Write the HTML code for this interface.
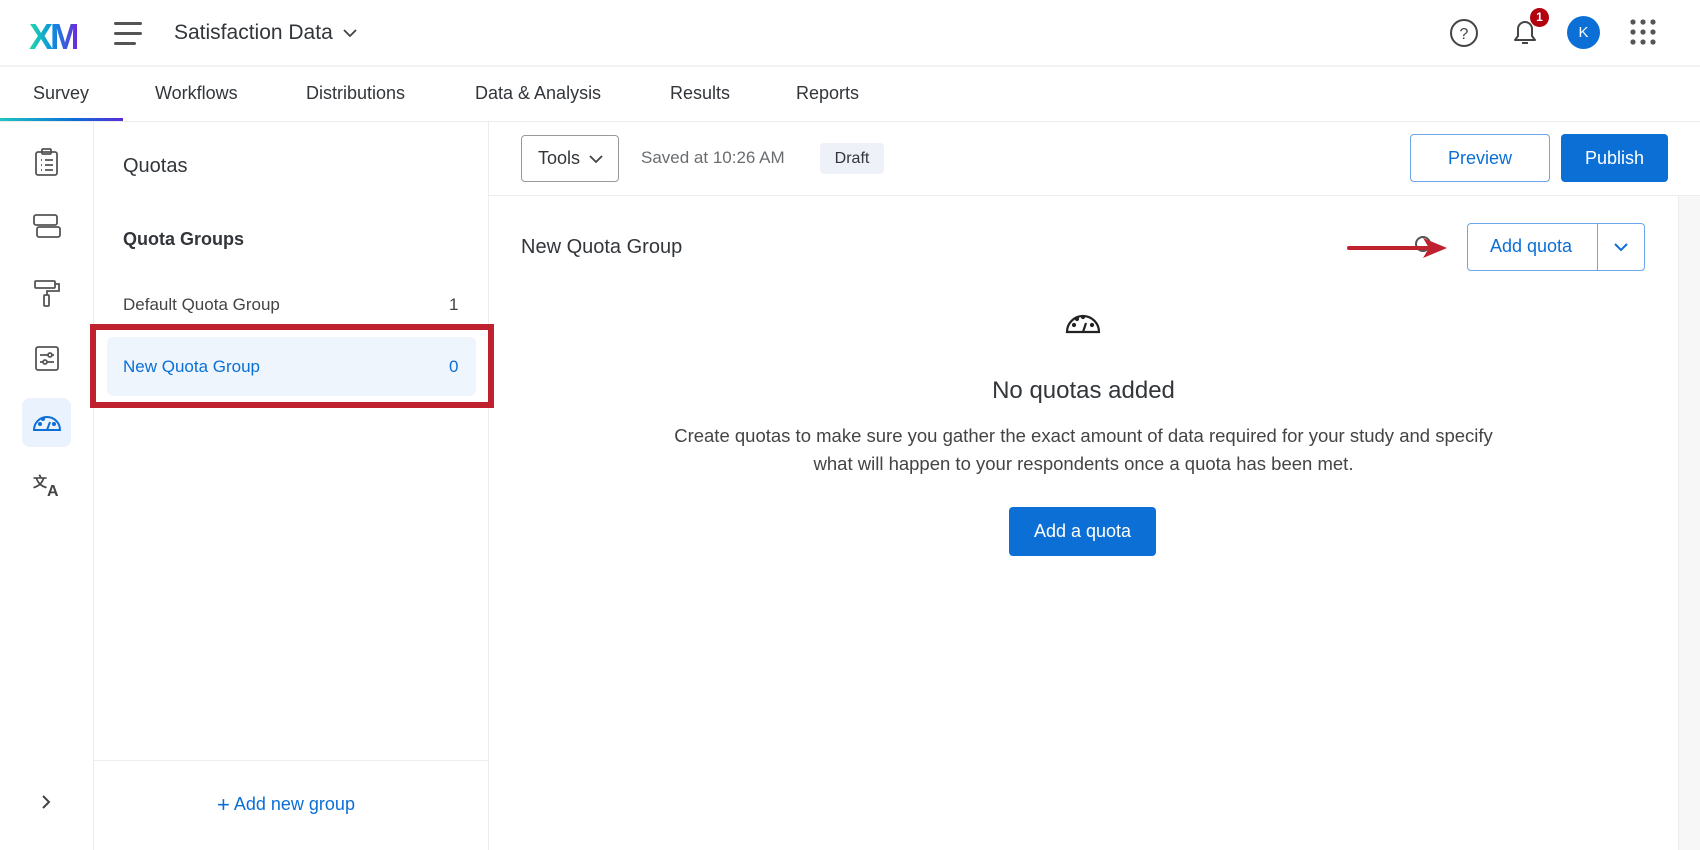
<!DOCTYPE html><html><head><style>
*{box-sizing:border-box;margin:0;padding:0}
body{width:1700px;height:850px;overflow:hidden;background:#fff;font-family:"Liberation Sans",sans-serif;color:#32363a;position:relative}
.a{position:absolute}
.t{white-space:nowrap}
</style></head><body>
<div class="a t" style="left:29px;top:16px;font-size:36px;font-weight:bold;letter-spacing:-3px;background:linear-gradient(90deg,#21dbaa,#0b8ee0 50%,#6c2bd9);-webkit-background-clip:text;color:transparent">XM</div>
<div class="a" style="left:114px;top:22px;width:28px;height:3px;background:#555;border-radius:2px"></div>
<div class="a" style="left:114px;top:32px;width:28px;height:3px;background:#555;border-radius:2px"></div>
<div class="a" style="left:114px;top:42px;width:22px;height:3px;background:#555;border-radius:2px"></div>
<div class="a t" style="left:174px;top:21px;font-size:21px">Satisfaction Data</div>
<svg class="a" style="left:342px;top:28px" width="16" height="10"><path d="M2 2l6 6 6-6" fill="none" stroke="#444" stroke-width="1.8"/></svg>
<svg class="a" style="left:1449px;top:18px" width="30" height="30"><circle cx="15" cy="15" r="13" fill="none" stroke="#444" stroke-width="2"/><text x="15" y="21" font-size="16" text-anchor="middle" fill="#444" font-family="Liberation Sans">?</text></svg>
<svg class="a" style="left:1510px;top:16px" width="30" height="32"><path d="M5 24h20l-3-4v-7a7 7 0 0 0-14 0v7z M12 27h6" fill="none" stroke="#444" stroke-width="2" stroke-linejoin="round"/></svg>
<div class="a" style="left:1530px;top:8px;width:19px;height:19px;border-radius:50%;background:#b3000f;color:#fff;font-size:12px;font-weight:bold;text-align:center;line-height:19px">1</div>
<div class="a" style="left:1567px;top:16px;width:33px;height:33px;border-radius:50%;background:#0b6fd6;color:#fff;font-size:15px;text-align:center;line-height:33px">K</div>
<svg class="a" style="left:1630px;top:19px" width="26" height="26"><g fill="#555"><circle cx="3" cy="3" r="2.6"/><circle cx="13" cy="3" r="2.6"/><circle cx="23" cy="3" r="2.6"/><circle cx="3" cy="13" r="2.6"/><circle cx="13" cy="13" r="2.6"/><circle cx="23" cy="13" r="2.6"/><circle cx="3" cy="23" r="2.6"/><circle cx="13" cy="23" r="2.6"/><circle cx="23" cy="23" r="2.6"/></g></svg>
<div class="a" style="left:0;top:65px;width:1700px;height:2px;background:#f3f3f3"></div>
<div class="a t" style="left:33px;top:83px;font-size:18px">Survey</div>
<div class="a t" style="left:155px;top:83px;font-size:18px">Workflows</div>
<div class="a t" style="left:306px;top:83px;font-size:18px">Distributions</div>
<div class="a t" style="left:475px;top:83px;font-size:18px">Data &amp; Analysis</div>
<div class="a t" style="left:670px;top:83px;font-size:18px">Results</div>
<div class="a t" style="left:796px;top:83px;font-size:18px">Reports</div>
<div class="a" style="left:0;top:118px;width:123px;height:3px;background:linear-gradient(90deg,#21c4c4,#0b6fd6 60%,#5a2bd9)"></div>
<div class="a" style="left:0;top:121px;width:1700px;height:1px;background:#ececec"></div>
<div class="a" style="left:93px;top:122px;width:1px;height:728px;background:#ededed"></div>
<svg class="a" style="left:34px;top:147px" width="26" height="30" fill="none" stroke="#555" stroke-width="1.8"><rect x="2" y="5" width="21" height="23" rx="2"/><rect x="8" y="2" width="9" height="5" rx="1"/><path d="M7 13h1M11 13h8M7 18h1M11 18h8M7 23h1M11 23h8"/></svg>
<svg class="a" style="left:32px;top:213px" width="30" height="28" fill="none" stroke="#555" stroke-width="1.8"><rect x="2" y="2" width="23" height="10" rx="2"/><rect x="5" y="14" width="23" height="10" rx="2"/></svg>
<svg class="a" style="left:33px;top:279px" width="28" height="30" fill="none" stroke="#555" stroke-width="1.8"><rect x="2" y="2" width="20" height="7" rx="1"/><path d="M22 5h4v7h-12v4"/><rect x="11" y="16" width="5" height="11" rx="1"/></svg>
<svg class="a" style="left:34px;top:345px" width="28" height="28" fill="none" stroke="#555" stroke-width="1.8"><rect x="2" y="2" width="22" height="23" rx="2"/><path d="M6 10h14M6 17h14"/><circle cx="16" cy="10" r="2" fill="#fff"/><circle cx="11" cy="17" r="2" fill="#fff"/></svg>
<div class="a" style="left:22px;top:398px;width:49px;height:49px;border-radius:8px;background:#eaf2fd"></div>
<svg class="a" style="left:32px;top:410px" width="30" height="22" fill="none" stroke="#0b6fd6" stroke-width="2"><path d="M2 20a13 13 0 0 1 26 0z"/><path d="M15 20l3-8"/><circle cx="8" cy="14" r="1" fill="#0b6fd6"/><circle cx="11" cy="9" r="1" fill="#0b6fd6"/><circle cx="22" cy="14" r="1" fill="#0b6fd6"/></svg>
<div class="a t" style="left:33px;top:472px;font-size:14px;color:#444;font-weight:bold">文</div>
<div class="a t" style="left:47px;top:483px;font-size:16px;color:#444;font-weight:bold">A</div>
<svg class="a" style="left:40px;top:793px" width="12" height="18"><path d="M3 3l6 6-6 6" fill="none" stroke="#444" stroke-width="2"/></svg>
<div class="a" style="left:488px;top:122px;width:1px;height:728px;background:#ededed"></div>
<div class="a t" style="left:123px;top:155px;font-size:20px">Quotas</div>
<div class="a t" style="left:123px;top:229px;font-size:18px;font-weight:bold">Quota Groups</div>
<div class="a t" style="left:123px;top:295px;font-size:17px;color:#444">Default Quota Group</div>
<div class="a t" style="left:449px;top:295px;font-size:17px;color:#444">1</div>
<div class="a" style="left:107px;top:337px;width:369px;height:59px;border-radius:6px;background:#eef5fd"></div>
<div class="a t" style="left:123px;top:357px;font-size:17px;color:#0b6fd6">New Quota Group</div>
<div class="a t" style="left:449px;top:357px;font-size:17px;color:#0b6fd6">0</div>
<div class="a" style="left:90px;top:324px;width:404px;height:84px;border:6px solid #c0212f"></div>
<div class="a" style="left:94px;top:760px;width:394px;height:1px;background:#ededed"></div>
<div class="a t" style="left:217px;top:792px;font-size:18px;color:#0b6fd6"><span style="font-size:22px;font-weight:300;vertical-align:-2px">+</span> Add new group</div>
<div class="a t" style="left:521px;top:135px;width:98px;height:47px;border:1px solid #999;border-radius:4px;font-size:18px;line-height:45px;padding-left:16px">Tools</div>
<svg class="a" style="left:588px;top:154px" width="16" height="10"><path d="M2 2l6 6 6-6" fill="none" stroke="#444" stroke-width="1.8"/></svg>
<div class="a t" style="left:641px;top:148px;font-size:17px;color:#6a6d70">Saved at 10:26 AM</div>
<div class="a t" style="left:820px;top:143px;width:64px;height:31px;background:#eef1f8;border-radius:4px;font-size:16px;line-height:31px;text-align:center">Draft</div>
<div class="a t" style="left:1410px;top:134px;width:140px;height:48px;border:1px solid #6aa6e8;border-radius:4px;font-size:18px;color:#0b6fd6;text-align:center;line-height:46px">Preview</div>
<div class="a t" style="left:1561px;top:134px;width:107px;height:48px;background:#0b6fd6;border-radius:4px;font-size:18px;color:#fff;text-align:center;line-height:48px">Publish</div>
<div class="a" style="left:489px;top:195px;width:1211px;height:1px;background:#ededed"></div>
<div class="a" style="left:1678px;top:196px;width:22px;height:654px;background:#f7f7f7;border-left:1px solid #ececec"></div>
<div class="a t" style="left:521px;top:236px;font-size:20px">New Quota Group</div>
<svg class="a" style="left:1414px;top:234px" width="20" height="26"><circle cx="9" cy="10" r="7" fill="none" stroke="#555" stroke-width="2"/></svg>
<svg class="a" style="left:1347px;top:236px" width="102" height="24"><path d="M2 12h84" stroke="#c0212f" stroke-width="4" stroke-linecap="round"/><path d="M76 2l24 10-24 10 6-10z" fill="#c0212f"/></svg>
<div class="a t" style="left:1467px;top:223px;width:178px;height:48px;border:1px solid #6aa6e8;border-radius:4px;background:#fff"></div>
<div class="a" style="left:1597px;top:224px;width:1px;height:46px;background:#6aa6e8"></div>
<div class="a t" style="left:1490px;top:236px;font-size:18px;color:#0b6fd6">Add quota</div>
<svg class="a" style="left:1613px;top:242px" width="16" height="10"><path d="M2 2l6 6 6-6" fill="none" stroke="#0b6fd6" stroke-width="2"/></svg>
<svg class="a" style="left:1065px;top:309px" width="36" height="26" fill="none" stroke="#222" stroke-width="2.2"><path d="M2 23a16 16 0 0 1 32 0z"/><path d="M18 23l3-9"/><circle cx="9" cy="16" r="1" fill="#222"/><circle cx="12" cy="10" r="1" fill="#222"/><circle cx="18" cy="8" r="1" fill="#222"/><circle cx="27" cy="16" r="1" fill="#222"/></svg>
<div class="a t" style="left:489px;width:1189px;top:377px;font-size:24px;text-align:center">No quotas added</div>
<div class="a" style="left:489px;width:1189px;top:422px;font-size:18.5px;line-height:28px;text-align:center;color:#444">Create quotas to make sure you gather the exact amount of data required for your study and specify<br>what will happen to your respondents once a quota has been met.</div>
<div class="a t" style="left:1009px;top:507px;width:147px;height:49px;background:#0b6fd6;border-radius:4px;font-size:18px;color:#fff;text-align:center;line-height:49px">Add a quota</div>
</body></html>
